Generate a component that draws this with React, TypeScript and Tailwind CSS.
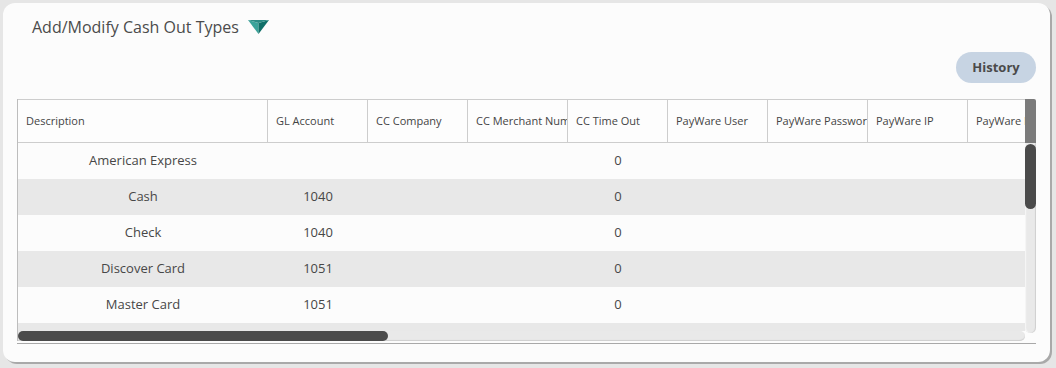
import React from 'react';

const columns = [
  { label: 'Description', w: 'w-[250px]' },
  { label: 'GL Account', w: 'w-[100px]' },
  { label: 'CC Company', w: 'w-[100px]' },
  { label: 'CC Merchant Num', w: 'w-[100px]' },
  { label: 'CC Time Out', w: 'w-[100px]' },
  { label: 'PayWare User', w: 'w-[100px]' },
  { label: 'PayWare Password', w: 'w-[100px]' },
  { label: 'PayWare IP', w: 'w-[100px]' },
  { label: 'PayWare Port', w: 'w-[100px]' },
];

const rows = [
  ['American Express', '', '', '', '0'],
  ['Cash', '1040', '', '', '0'],
  ['Check', '1040', '', '', '0'],
  ['Discover Card', '1051', '', '', '0'],
  ['Master Card', '1051', '', '', '0'],
  ['Visa', '1051', '', '', '0'],
];

const Caret = () => (
  <svg width="21" height="14" viewBox="0 0 21 14" className="ml-[9px] mt-[4px]">
    <polygon points="0,0 10.5,3 10.5,14" fill="#3aa39a" />
    <polygon points="21,0 10.5,3 10.5,14" fill="#0f6f68" />
    <polygon points="0,0 21,0 10.5,3" fill="#2a8b84" />
  </svg>
);

export default function App() {
  return (
    <div className="h-[368px] w-[1056px] bg-[#e6e6e6] pt-[3px] pl-[3px] font-['Open_Sans',sans-serif] text-[#4a4a4a]">
      <div className="h-[359px] w-[1047px] rounded-xl bg-[#fcfcfc] shadow-[2px_2px_0_#a9a9a9] flex flex-col">
        {/* Title */}
        <div className="flex items-start pl-[29px] pt-[13px] h-[46px]">
          <span className="text-[16px] leading-[22px] text-[#4b4b4b]">Add/Modify Cash Out Types</span>
          <Caret />
        </div>

        {/* Toolbar */}
        <div className="flex justify-end pr-[14px] pt-[3px]">
          <button className="h-[31px] w-[80px] rounded-full bg-[#c7d4e3] text-[13px] font-bold text-[#4a4a4a]">
            History
          </button>
        </div>

        {/* Grid */}
        <div className="ml-[14px] mt-[16px] w-[1019px]">
          <div className="flex">
            <div className="w-[1008px] h-[232px] overflow-hidden border-l border-[#bdbdbd]">
              <div className="flex w-max border-t border-b border-[#cdcdcd] bg-[#fdfdfd] h-[44px]">
                {columns.map((c, i) => (
                  <div
                    key={c.label}
                    className={`${c.w} shrink-0 flex items-center pl-[8px] text-[11px] whitespace-nowrap overflow-hidden text-[#444] ${i < columns.length - 1 ? 'border-r border-[#cdcdcd]' : ''}`}
                  >
                    {c.label}
                  </div>
                ))}
              </div>
              {rows.map((r, ri) => (
                <div
                  key={r[0]}
                  className={`flex w-max h-[36px] items-center text-[13px] text-[#474747] ${ri % 2 === 1 ? 'bg-[#e8e8e8]' : 'bg-[#fcfcfc]'}`}
                >
                  <div className="w-[250px] shrink-0 text-center">{r[0]}</div>
                  <div className="w-[100px] shrink-0 text-center">{r[1]}</div>
                  <div className="w-[100px] shrink-0 text-center">{r[2]}</div>
                  <div className="w-[100px] shrink-0 text-center">{r[3]}</div>
                  <div className="w-[100px] shrink-0 text-center">{r[4]}</div>
                  <div className="w-[400px] shrink-0" />
                </div>
              ))}
            </div>

            {/* vertical scrollbar */}
            <div className="w-[11px] flex flex-col">
              <div className="h-[44px] bg-[#7b7b7b] rounded-tr-[2px]" />
              <div className="relative h-[190px] rounded-b-full bg-[#e9e9e9] shadow-[inset_-1px_0_1px_#cfcfcf,inset_1px_0_1px_#f7f7f7]">
                <div className="absolute left-0 top-[1px] h-[65px] w-[11px] rounded-full bg-[#4b4b4b]" />
              </div>
            </div>
          </div>

          {/* horizontal scrollbar */}
          <div className="-mt-[2px] w-[1008px] h-[10px] rounded-full bg-[#e9e9e9] shadow-[inset_0_-1px_1px_#cfcfcf] relative border-l border-[#bdbdbd] rounded-l-none">
            <div className="absolute left-0 top-0 h-[10px] w-[370px] rounded-full bg-[#4b4b4b]" />
          </div>
          <div className="mt-[2px] h-px w-[1019px] bg-[#a9a9a9]" />
        </div>
      </div>
    </div>
  );
}
